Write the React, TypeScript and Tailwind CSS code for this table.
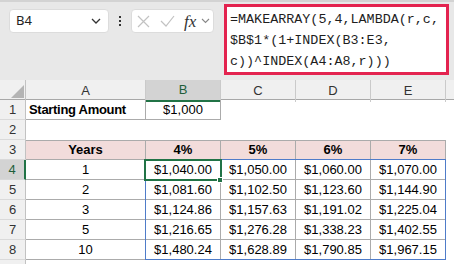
import React from "react";

const GRID = "grid grid-cols-[26px_120px_75px_75px_75px_75px_1fr]";
const F = { fontFamily: '"Liberation Sans", Arial, sans-serif' } as React.CSSProperties;

const years = [1, 2, 3, 5, 10];
const values = [
  ["$1,040.00", "$1,050.00", "$1,060.00", "$1,070.00"],
  ["$1,081.60", "$1,102.50", "$1,123.60", "$1,144.90"],
  ["$1,124.86", "$1,157.63", "$1,191.02", "$1,225.04"],
  ["$1,216.65", "$1,276.28", "$1,338.23", "$1,402.55"],
  ["$1,480.24", "$1,628.89", "$1,790.85", "$1,967.15"],
];

function RowHead({ n, active }: { n: string; active?: boolean }) {
  return active ? (
    <div className="flex h-[20px] items-center justify-center border-b border-r-2 border-b-[#d8d8d8] border-r-[#217346] bg-[#d3d3d3] text-[#1f5e3a]">
      {n}
    </div>
  ) : (
    <div className="flex h-[20px] items-center justify-center border-b border-r border-b-[#dadada] border-r-[#c2c2c2] bg-[#f0f0f0] text-[#333]">
      {n}
    </div>
  );
}

function Cell({ children, className = "" }: { children?: React.ReactNode; className?: string }) {
  return (
    <div className={`flex h-[20px] items-center justify-center border-r border-b border-[#ababab] text-black ${className}`}>
      {children}
    </div>
  );
}

function Empty() {
  return <div className="h-[20px]" />;
}

export default function App() {
  return (
    <div className="relative h-[264px] w-[454px] overflow-hidden bg-white text-[13px]" style={F}>
      {/* formula bar area */}
      <div className="flex h-[80px] items-start border-t-2 border-[#d3d3d3] bg-[#e8e8e8]">
        <div className="ml-[9px] mt-[7px] flex h-[24px] w-[100px] items-center justify-between rounded-[4px] border border-[#dcdcdc] bg-white pl-[6px] pr-[7px]">
          <span className="text-[13px] text-[#222]" style={{ fontFamily: '"Noto Sans", sans-serif' }}>B4</span>
          <svg width="10" height="6" viewBox="0 0 10 6">
            <path d="M1 1l4 4 4-4" fill="none" stroke="#333" strokeWidth="1.3" />
          </svg>
        </div>
        <div className="ml-[10px] mt-[14px] flex w-[2px] flex-col gap-[2px]">
          <div className="h-[2px] w-[2px] bg-[#333]" />
          <div className="h-[2px] w-[2px] bg-[#333]" />
          <div className="h-[2px] w-[2px] bg-[#333]" />
        </div>
        <div className="ml-[10px] mt-[7px] flex h-[24px] w-[83px] items-center rounded-[4px] border border-[#dcdcdc] bg-white pl-[5px]">
          <svg width="13" height="13" viewBox="0 0 13 13">
            <path d="M1 1l11 11M12 1L1 12" stroke="#c2c2c2" strokeWidth="1.2" />
          </svg>
          <svg className="ml-[10px]" width="15" height="12" viewBox="0 0 15 12">
            <path d="M1 6l5 5 8-10" fill="none" stroke="#c2c2c2" strokeWidth="1.2" />
          </svg>
          <span
            className="ml-[9px] text-[17px] italic leading-none text-[#333]"
            style={{ fontFamily: '"Liberation Serif", "Times New Roman", serif' }}
          >
            fx
          </span>
          <svg className="ml-[5px]" width="9" height="6" viewBox="0 0 9 6">
            <path d="M1 1l3.5 3.5L8 1" fill="none" stroke="#888" strokeWidth="1.1" />
          </svg>
        </div>
        <div
          className="ml-[10px] mt-[2px] h-[71px] w-[225px] border-[3px] border-[#e3234f] bg-white pl-[3px] pt-[2px] text-[13.4px] leading-[21px] text-[#1e1e1e]"
          style={{ fontFamily: '"Liberation Mono", "Courier New", monospace' }}
        >
          <div>=MAKEARRAY(5,4,LAMBDA(r,c,</div>
          <div>$B$1*(1+INDEX(B3:E3,</div>
          <div>c))^INDEX(A4:A8,r)))</div>
        </div>
      </div>

      {/* sheet */}
      <div className="relative">
        {/* column headers */}
        <div className={`${GRID} h-[20px] border-b border-[#a8a8a8] bg-[#f0f0f0] text-[#333]`}>
          <div className="relative border-r border-[#c2c2c2]">
            <svg className="absolute left-[11px] top-[5px]" width="13" height="13" viewBox="0 0 13 13">
              <path d="M13 0L13 13L0 13Z" fill="#b4b4b4" />
            </svg>
          </div>
          <div className="flex items-center justify-center border-r border-[#cacaca]">A</div>
          <div className="flex items-center justify-center border-r border-b-2 border-r-[#cacaca] border-b-[#217346] bg-[#d3d3d3] text-[#1f5e3a]">B</div>
          <div className="flex items-center justify-center border-r border-[#cacaca]">C</div>
          <div className="flex items-center justify-center border-r border-[#cacaca]">D</div>
          <div className="flex items-center justify-center border-r border-[#cacaca]">E</div>
          <div />
        </div>

        {/* row 1 */}
        <div className={GRID}>
          <RowHead n="1" />
          <Cell className="justify-start pl-[3px] font-bold tracking-[-0.3px]">Starting Amount</Cell>
          <Cell>$1,000</Cell>
          <Empty />
          <Empty />
          <Empty />
          <Empty />
        </div>

        {/* row 2 */}
        <div className={GRID}>
          <RowHead n="2" />
          <Empty />
          <Empty />
          <Empty />
          <Empty />
          <Empty />
          <Empty />
        </div>

        {/* row 3 */}
        <div className={GRID}>
          <RowHead n="3" />
          <Cell className="border-t bg-[#f2dcdb] font-bold">Years</Cell>
          <Cell className="border-t bg-[#f2dcdb] font-bold">4%</Cell>
          <Cell className="border-t bg-[#f2dcdb] font-bold">5%</Cell>
          <Cell className="border-t bg-[#f2dcdb] font-bold">6%</Cell>
          <Cell className="border-t bg-[#f2dcdb] font-bold">7%</Cell>
          <Empty />
        </div>

        {/* rows 4-8 */}
        {years.map((y, i) => (
          <div key={y} className={GRID}>
            <RowHead n={String(i + 4)} active={i === 0} />
            <Cell>{y}</Cell>
            {values[i].map((v) => (
              <Cell key={v}>{v}</Cell>
            ))}
            <Empty />
          </div>
        ))}

        {/* row 9 partial (no visible label) */}
        <div className={GRID}>
          <div className="h-[20px] border-r border-[#c2c2c2] bg-[#f0f0f0]" />
        </div>

        {/* spill range border */}
        <div className="pointer-events-none absolute left-[145px] top-[79px] h-[101px] w-[301px] border border-[#4f7cc9]" />
        {/* active cell */}
        <div className="pointer-events-none absolute left-[144px] top-[79px] h-[22px] w-[78px] border-2 border-[#217346]" />
        <div className="pointer-events-none absolute left-[217px] top-[97px] h-[6px] w-[6px] border border-white bg-[#217346]" />
      </div>
    </div>
  );
}
